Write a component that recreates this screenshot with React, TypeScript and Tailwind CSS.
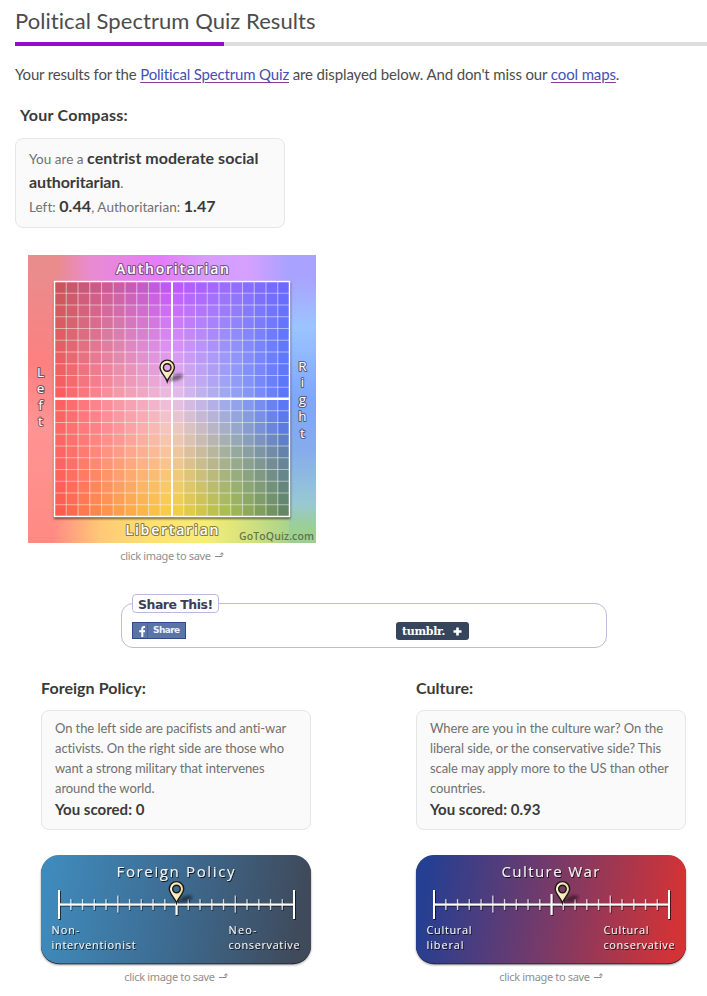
import React from 'react';

type RGB = [number, number, number];

// Colour mesh of the compass: one row per stop in MESH_Y, one column per stop in MESH_X
const MESH_X = [0, 0.25, 0.5, 0.75, 1];
const MESH_Y = [0, 0.25, 0.5, 0.625, 0.75, 1];
const MESH: RGB[][] = [
  [[198, 84, 84], [204, 88, 156], [192, 80, 252], [150, 108, 252], [104, 104, 252]],
  [[226, 92, 92], [220, 128, 168], [218, 140, 250], [150, 144, 252], [92, 118, 252]],
  [[255, 88, 88], [250, 150, 162], [236, 192, 228], [152, 168, 244], [84, 112, 250]],
  [[255, 98, 98], [255, 144, 152], [244, 202, 192], [158, 172, 200], [84, 118, 228]],
  [[255, 94, 94], [255, 154, 126], [248, 200, 150], [156, 174, 146], [96, 128, 158]],
  [[255, 84, 78], [255, 154, 70], [250, 210, 58], [164, 188, 76], [92, 130, 96]],
];

const span = (stops: number[], v: number): [number, number] => {
  let i = 0;
  while (i < stops.length - 2 && v > stops[i + 1]) i++;
  return [i, (v - stops[i]) / (stops[i + 1] - stops[i])];
};

const meshColor = (x: number, y: number) => {
  const [i, tx] = span(MESH_X, x);
  const [j, ty] = span(MESH_Y, y);
  const c = [0, 1, 2].map((k) => {
    const top = MESH[j][i][k] * (1 - tx) + MESH[j][i + 1][k] * tx;
    const bottom = MESH[j + 1][i][k] * (1 - tx) + MESH[j + 1][i + 1][k] * tx;
    return Math.round(top * (1 - ty) + bottom * ty);
  });
  return `rgb(${c.join(',')})`;
};

const Pin: React.FC<{ x: number; y: number; id: string }> = ({ x, y, id }) => (
  <g transform={`translate(${x} ${y})`}>
    <defs>
      <linearGradient id={id} x1="0" x2="1">
        <stop offset="0" stopColor="#fffbe0" />
        <stop offset="1" stopColor="#f3dc9c" />
      </linearGradient>
      <filter id={`${id}-blur`} x="-50%" y="-50%" width="200%" height="200%">
        <feGaussianBlur stdDeviation="1.5" />
      </filter>
    </defs>
    <path d="M0 0 L6 -6 Q11 -9 16 -7 Q17 -4 10 -1 Z" fill="#000" opacity=".45" filter={`url(#${id}-blur)`} />
    <path
      fillRule="evenodd"
      d="M0 0 C-1.5 -5 -7.2 -9 -7.2 -14.2 A7.2 7.2 0 0 1 7.2 -14.2 C7.2 -9 1.5 -5 0 0 Z M0 -17.8 A3.8 3.8 0 1 0 0 -10.2 A3.8 3.8 0 1 0 0 -17.8 Z"
      fill={`url(#${id})`}
      stroke="#1c1a14"
      strokeWidth="1.4"
    />
  </g>
);

const Compass = () => {
  const cell = 235 / 20;
  const cells = Array.from({ length: 400 }, (_, n) => [n % 20, Math.floor(n / 20)]);
  const lines = Array.from({ length: 19 }, (_, n) => 26.5 + (n + 1) * cell);

  return (
    <svg width="288" height="288" viewBox="0 0 288 288" className="block font-['Open_Sans',sans-serif]">
      <defs>
        <linearGradient id="top" x1="0" x2="1">
          <stop offset=".1" stopColor="#e98c8c" />
          <stop offset=".22" stopColor="#e98bd2" />
          <stop offset=".46" stopColor="#e57cfa" />
          <stop offset=".62" stopColor="#d89cfd" />
          <stop offset=".77" stopColor="#d4a0ff" />
          <stop offset=".9" stopColor="#aaa2ff" />
        </linearGradient>
        <linearGradient id="bottom" x1="0" x2="1">
          <stop offset=".09" stopColor="#ff8c84" />
          <stop offset=".25" stopColor="#ffc876" />
          <stop offset=".42" stopColor="#ffe070" />
          <stop offset=".62" stopColor="#f6ee74" />
          <stop offset=".78" stopColor="#cfe080" />
          <stop offset=".95" stopColor="#9ccf90" />
        </linearGradient>
        <linearGradient id="left" x1="0" y1="0" x2="0" y2="1">
          <stop offset=".05" stopColor="#e98c8c" />
          <stop offset=".38" stopColor="#fd8080" />
          <stop offset=".6" stopColor="#ff9494" />
          <stop offset="1" stopColor="#ff8a82" />
        </linearGradient>
        <linearGradient id="right" x1="0" y1="0" x2="0" y2="1">
          <stop offset=".08" stopColor="#a9a3ff" />
          <stop offset=".25" stopColor="#9cc4ff" />
          <stop offset=".5" stopColor="#7ea6fb" />
          <stop offset=".68" stopColor="#86acec" />
          <stop offset=".86" stopColor="#98c8d4" />
          <stop offset=".95" stopColor="#9ccf92" />
        </linearGradient>
        <filter id="gridShadow" x="-5%" y="-5%" width="110%" height="110%">
          <feGaussianBlur stdDeviation="1.2" />
        </filter>
      </defs>

      <rect width="288" height="144" fill="url(#top)" />
      <rect y="144" width="288" height="144" fill="url(#bottom)" />
      <rect width="27" height="288" fill="url(#left)" />
      <rect x="261" width="27" height="288" fill="url(#right)" />

      <rect x="26" y="27" width="236.5" height="237" fill="#000" opacity=".55" filter="url(#gridShadow)" />
      {cells.map(([x, y]) => (
        <rect
          key={`${x}-${y}`}
          x={26.5 + x * cell}
          y={26.5 + y * cell}
          width={cell + 0.3}
          height={cell + 0.3}
          fill={meshColor((x + 0.5) / 20, (y + 0.5) / 20)}
        />
      ))}
      {lines.map((p) => (
        <g key={p} stroke="#fff" strokeOpacity=".5" strokeWidth="1.1">
          <line x1={p} x2={p} y1="27" y2="261" />
          <line x1="27" x2="261" y1={p} y2={p} />
        </g>
      ))}
      <rect x="26.5" y="26.5" width="235" height="235" fill="none" stroke="#fff" strokeWidth="1.5" />
      <path d="M144 27 V261" stroke="#fff" strokeWidth="2" />
      <path d="M27 143.8 H261" stroke="#fff" strokeWidth="2.6" />

      <g
        fill="#fff"
        stroke="#4a3a55"
        strokeOpacity=".7"
        strokeWidth="2.2"
        strokeLinejoin="round"
        paintOrder="stroke"
        fontSize="14"
        fontWeight="600"
        textAnchor="middle"
      >
        <text x="144.5" y="19" textLength="113">Authoritarian</text>
        <text x="144" y="279.5" textLength="93" stroke="#5a5030">Libertarian</text>
        <g fontSize="13.5" fontWeight="500">
          {['L', 'e', 'f', 't'].map((c, i) => (
            <text key={c} x="12.5" y={121.5 + i * 16.5}>{c}</text>
          ))}
          {['R', 'i', 'g', 'h', 't'].map((c, i) => (
            <text key={c} x="274.5" y={115.5 + i * 16.8}>{c}</text>
          ))}
        </g>
      </g>
      <text x="211" y="284.5" fontSize="10.5" fontWeight="600" fill="#4d5a38" fillOpacity=".8" textLength="75">
        GoToQuiz.com
      </text>
      <Pin x={139.2} y={126.5} id="compassPin" />
    </svg>
  );
};

interface ScaleProps {
  id: string;
  title: string;
  titleWidth: number;
  left: [string, number][];
  right: [string, number][];
  colors: [string, string, string];
  score: number;
}

const Scale: React.FC<ScaleProps> = ({ id, title, titleWidth, left, right, colors, score }) => (
  <svg width="276" height="114" viewBox="-3 0 276 114" className="-ml-[3px] block font-['Open_Sans',sans-serif]">
    <defs>
      <linearGradient id={`${id}Bg`} gradientUnits="userSpaceOnUse" x1="10" y1="20" x2="262" y2="60">
        <stop offset="0" stopColor={colors[0]} />
        <stop offset=".5" stopColor={colors[1]} />
        <stop offset="1" stopColor={colors[2]} />
      </linearGradient>
      <filter id={`${id}Shadow`} x="-5%" y="-5%" width="110%" height="115%">
        <feGaussianBlur stdDeviation="1" />
      </filter>
      <filter id={`${id}Text`} x="-10%" y="-10%" width="120%" height="130%">
        <feDropShadow dx=".8" dy="1" stdDeviation=".7" floodColor="#000" floodOpacity=".8" />
      </filter>
    </defs>
    <rect y="2" width="270" height="108" rx="18" fill="#000" opacity=".4" filter={`url(#${id}Shadow)`} />
    <rect y=".8" width="270" height="108.4" rx="18" fill="#1b1d26" />
    <rect width="270" height="108.4" rx="18" fill={`url(#${id}Bg)`} />

    <g filter={`url(#${id}Text)`} stroke="#fff">
      {Array.from({ length: 21 }, (_, i) => {
        const x = 18 + i * 11.75;
        if (i === 0 || i === 20) return <line key={i} x1={x} x2={x} y1="35" y2="64" strokeWidth="2" />;
        if (i === 10) return <line key={i} x1={x} x2={x} y1="39" y2="60" strokeWidth="2" />;
        const tall = i % 5 === 0;
        return (
          <line key={i} x1={x} x2={x} y1={tall ? 40.5 : 44} y2={tall ? 57.5 : 55} strokeWidth="1.2" strokeOpacity=".75" />
        );
      })}
      <line x1="18" x2="253" y1="49.5" y2="49.5" strokeWidth="2" />
    </g>

    <g filter={`url(#${id}Text)`} fill="#f4f4f4" fontSize="10.8" fontWeight="500">
      <text x={134.5 - titleWidth / 2} y="22" fontSize="15" textLength={titleWidth}>{title}</text>
      {left.map(([line, width], i) => (
        <text key={line} x="10.5" y={79 + i * 15} textLength={width}>{line}</text>
      ))}
      {right.map(([line, width], i) => (
        <text key={line} x="187.5" y={79 + i * 15} textLength={width}>{line}</text>
      ))}
    </g>
    <Pin x={135.5 + score * 11.75} y={48} id={`${id}Pin`} />
  </svg>
);

const SaveHint = () => (
  <div className="flex items-center justify-center gap-1 text-[11px] leading-4 text-[#8f8f8f]">
    <span className="font-['Noto_Sans',sans-serif] tracking-[-0.34px]">click image to save</span>
    <svg width="9" height="7" viewBox="0 0 9 7" fill="none" stroke="#888" strokeWidth="1" className="-mt-0.5">
      <path d="M0 4.5 H7 V1 M5.2 2.4 L7 .7 L8.6 2.2" />
    </svg>
  </div>
);

interface ResultProps {
  heading: string;
  lines: string[];
  score: string;
  children: React.ReactNode;
}

const Result: React.FC<ResultProps> = ({ heading, lines, score, children }) => (
  <section className="w-[270px]">
    <h3 className="text-base leading-6 font-bold tracking-[0.05px] text-[#3a3a3a]">{heading}</h3>
    <div className="mt-[10px] h-[120px] rounded-lg border border-[#e6e6e6] bg-[#fafafa] px-[13px] pt-[7px] text-[13px] leading-5 tracking-[-0.08px] whitespace-nowrap text-[#707070]">
      {lines.map((line) => (
        <p key={line}>{line}</p>
      ))}
      <p className="pt-px text-[15px] font-bold tracking-[0.02px] text-[#3a3a3a]">You scored: {score}</p>
    </div>
    <div className="mt-[25px]">{children}</div>
    <SaveHint />
  </section>
);

export default function App() {
  return (
    <main className="h-[996px] w-[707px] overflow-hidden bg-white pl-[15px] font-['Lato',sans-serif] text-[#4c4c4c]">
      <h1 className="h-[42px] pt-[7px] text-[22px] leading-7 tracking-[0.06px] whitespace-nowrap">Political Spectrum Quiz Results</h1>
      <div className="h-1 bg-[#ddd]">
        <div className="h-1 w-[209px] bg-[#930cd0]" />
      </div>

      <p className="mt-[18px] text-[15px] leading-5 tracking-[-0.125px] whitespace-nowrap">
        <span className="tracking-[-0.17px]">Your results for the </span>
        <a href="#" className="tracking-[-0.17px] text-[#444fb4] underline decoration-[#8a3a9a] underline-offset-2">Political Spectrum Quiz</a> are displayed below. And don't miss our{' '}
        <a href="#" className="text-[#444fb4] underline decoration-[#8a3a9a] underline-offset-2">cool maps</a>.
      </p>

      <h3 className="mt-[19px] ml-[5px] text-base leading-6 font-bold tracking-[0.25px] text-[#3a3a3a]">Your Compass:</h3>
      <div className="mt-[11px] h-[90px] w-[270px] rounded-lg border border-[#e6e6e6] bg-[#fafafa] px-[13px] pt-[7.5px] text-[13.5px] leading-[24.4px] tracking-[0.04px] whitespace-nowrap text-[#707070]">
        <p>You are a <b className="text-base leading-none text-[#3a3a3a]">centrist moderate social</b></p>
        <p><b className="text-base leading-none tracking-[-0.1px] text-[#3a3a3a]">authoritarian</b>.</p>
        <p className="tracking-[0.06px]">
          Left: <b className="text-base leading-none text-[#3a3a3a]">0.44</b>, Authoritarian: <b className="text-base leading-none text-[#3a3a3a]">1.47</b>
        </p>
      </div>

      <div className="mt-[27px] ml-[13px] w-[288px]">
        <Compass />
        <div className="mt-[5px]">
          <SaveHint />
        </div>
      </div>

      <fieldset className="mt-[30px] ml-[106px] h-[54px] w-[486px] rounded-xl border border-[#bdb9dc] pl-[10px]">
        <legend className="h-[19px] w-[87px] rounded border border-[#bdb9dc] bg-white pl-[5px] font-['DejaVu_Sans',sans-serif] text-[12.5px] leading-[19px] font-bold tracking-[-0.5px] whitespace-nowrap text-[#3d3d55]">
          Share This!
        </legend>
        <div className="mt-[9px] flex items-start">
          <button className="flex h-[17px] w-[54px] items-center border border-[#2f4a85] bg-[#5a74a8]">
            <svg width="15" height="15" viewBox="0 0 15 15" fill="none" stroke="#fff" strokeWidth="2">
              <path d="M12 4 H11 Q9.3 4 9.3 5.8 V14 M6.2 8.2 H12" />
              <path d="M14.5 0 V15" stroke="#48629a" strokeWidth="1" />
            </svg>
            <span className="ml-[5px] font-['DejaVu_Sans',sans-serif] text-[9px] leading-none font-bold tracking-[-0.6px] text-[#eef1fa]">Share</span>
          </button>
          <button className="ml-[210px] flex h-[18px] w-[73px] items-center rounded-[3px] bg-[#35465c] pl-1.5 text-white">
            <span className="w-[43px] text-left font-['DejaVu_Serif',serif] text-[11px] leading-none font-bold tracking-[-0.3px]">tumblr.</span>
            <svg width="9" height="9" viewBox="0 0 9 9" className="ml-2" stroke="#fff" strokeWidth="2.6">
              <path d="M4.5 .5 V8.5 M.5 4.5 H8.5" />
            </svg>
          </button>
        </div>
      </fieldset>

      <div className="mt-7 ml-[26px] flex gap-[105px]">
        <Result
          heading="Foreign Policy:"
          lines={[
            'On the left side are pacifists and anti-war',
            'activists. On the right side are those who',
            'want a strong military that intervenes',
            'around the world.',
          ]}
          score="0"
        >
          <Scale
            id="foreign"
            title="Foreign Policy"
            titleWidth={118}
            left={[['Non-', 28], ['interventionist', 84]]}
            right={[['Neo-', 28], ['conservative', 71]]}
            colors={['#3f8abb', '#3d6b91', '#3f4a5b']}
            score={0}
          />
        </Result>
        <Result
          heading="Culture:"
          lines={[
            'Where are you in the culture war? On the',
            'liberal side, or the conservative side? This',
            'scale may apply more to the US than other',
            'countries.',
          ]}
          score="0.93"
        >
          <Scale
            id="culture"
            title="Culture War"
            titleWidth={98}
            left={[['Cultural', 45], ['liberal', 37]]}
            right={[['Cultural', 45], ['conservative', 71]]}
            colors={['#253f92', '#783a68', '#d23336']}
            score={0.93}
          />
        </Result>
      </div>
    </main>
  );
}
